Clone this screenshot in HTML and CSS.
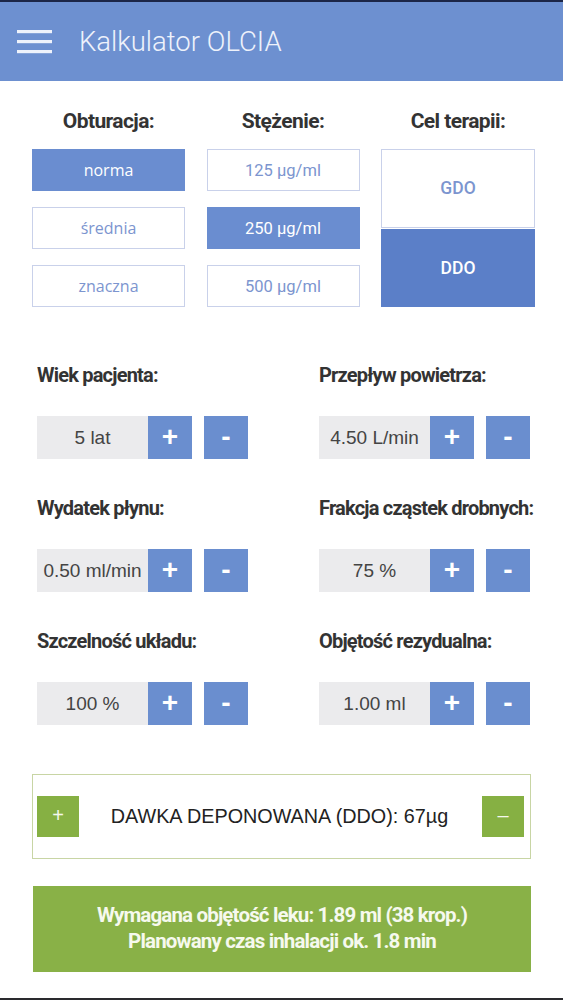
FILE: index.html
```html
<!DOCTYPE html>
<html lang="pl">
<head>
<meta charset="utf-8">
<title>Kalkulator OLCIA</title>
<link rel="stylesheet" href="styles.css">
</head>
<body>
<div class="screen">
  <header class="appbar">
    <svg class="menu" width="35" height="24" viewBox="0 0 35 24" aria-hidden="true">
      <rect x="0" y="0" width="35" height="3.2" fill="#eef2fb"/>
      <rect x="0" y="10" width="35" height="3.2" fill="#eef2fb"/>
      <rect x="0" y="20" width="35" height="3.2" fill="#eef2fb"/>
    </svg>
    <h1 class="title">Kalkulator OLCIA</h1>
  </header>

  <section class="options">
    <div class="opt-col">
      <h2 class="heading">Obturacja:</h2>
      <div class="opt-list">
        <div class="opt opt-sans active">norma</div>
        <div class="opt opt-sans">średnia</div>
        <div class="opt opt-sans">znaczna</div>
      </div>
    </div>
    <div class="opt-col">
      <h2 class="heading">Stężenie:</h2>
      <div class="opt-list">
        <div class="opt">125 µg/ml</div>
        <div class="opt active">250 µg/ml</div>
        <div class="opt">500 µg/ml</div>
      </div>
    </div>
    <div class="opt-col">
      <h2 class="heading">Cel terapii:</h2>
      <div class="opt-list target">
        <div class="opt tall">GDO</div>
        <div class="opt tall active dark">DDO</div>
      </div>
    </div>
  </section>

  <section class="fields">
    <div class="field">
      <div class="label">Wiek pacjenta:</div>
      <div class="stepper">
        <div class="value">5 lat</div>
        <div class="btn">+</div>
        <div class="btn minus">-</div>
      </div>
    </div>
    <div class="field">
      <div class="label">Przepływ powietrza:</div>
      <div class="stepper">
        <div class="value">4.50 L/min</div>
        <div class="btn">+</div>
        <div class="btn minus">-</div>
      </div>
    </div>
    <div class="field">
      <div class="label">Wydatek płynu:</div>
      <div class="stepper">
        <div class="value">0.50 ml/min</div>
        <div class="btn">+</div>
        <div class="btn minus">-</div>
      </div>
    </div>
    <div class="field">
      <div class="label">Frakcja cząstek drobnych:</div>
      <div class="stepper">
        <div class="value">75 %</div>
        <div class="btn">+</div>
        <div class="btn minus">-</div>
      </div>
    </div>
    <div class="field">
      <div class="label">Szczelność układu:</div>
      <div class="stepper">
        <div class="value">100 %</div>
        <div class="btn">+</div>
        <div class="btn minus">-</div>
      </div>
    </div>
    <div class="field">
      <div class="label">Objętość rezydualna:</div>
      <div class="stepper">
        <div class="value">1.00 ml</div>
        <div class="btn">+</div>
        <div class="btn minus">-</div>
      </div>
    </div>
  </section>

  <section class="dose">
    <div class="gbtn">+</div>
    <div class="dose-text">DAWKA DEPONOWANA (DDO): 67µg</div>
    <div class="gbtn">&#8211;</div>
  </section>

  <section class="result">
    <div>Wymagana objętość leku: 1.89 ml (38 krop.)</div>
    <div>Planowany czas inhalacji ok. 1.8 min</div>
  </section>
</div>
</body>
</html>
```

FILE: styles.css
```css
* { box-sizing: border-box; }
html, body { margin: 0; padding: 0; background: #ffffff; }

.screen {
  width: 563px;
  height: 1000px;
  border-top: 2px solid #1c2647;
  border-bottom: 2px solid #2a2a2e;
  display: flex;
  flex-direction: column;
  background: #ffffff;
}

.appbar {
  height: 79px;
  background: #6d90d0;
  display: flex;
  align-items: center;
  padding-left: 17px;
  gap: 27px;
  flex-shrink: 0;
}
.menu { display: block; margin-top: 1px; }
.title {
  margin: 0;
  font-family: Roboto, "Liberation Sans", sans-serif;
  font-weight: 300;
  font-size: 27.5px;
  color: #eef2fb;
}

.options {
  display: grid;
  grid-template-columns: 153px 153px 154px;
  column-gap: 21.5px;
  padding: 28px 0 0 32px;
}
.heading {
  margin: 0 0 16px;
  text-align: center;
  font-family: Roboto, "Liberation Sans", sans-serif;
  font-weight: 700;
  font-size: 21px;
  letter-spacing: -0.6px;
  line-height: 24px;
  color: #333333;
  white-space: nowrap;
}
.opt-list {
  display: flex;
  flex-direction: column;
  gap: 16px;
}
.opt-list.target { gap: 1px; }
.opt {
  height: 42px;
  display: flex;
  align-items: center;
  justify-content: center;
  border: 1px solid #c9d1ea;
  background: #ffffff;
  color: #7c95cf;
  font-family: Roboto, "Liberation Sans", sans-serif;
  font-size: 16.5px;
}
.opt-sans { font-family: "Open Sans", "Liberation Sans", sans-serif; font-size: 16px; }
.opt.active {
  background: #6a8dd0;
  border-color: #6a8dd0;
  color: #ffffff;
}
.opt.tall {
  height: 78.5px;
  font-weight: 500;
  font-size: 17.5px;
}
.opt.dark { background: #5b7fc8; border-color: #5b7fc8; }

.fields {
  display: grid;
  grid-template-columns: 282px 1fr;
  row-gap: 37px;
  padding: 56px 0 0 37px;
}
.label {
  font-family: Roboto, "Liberation Sans", sans-serif;
  font-weight: 700;
  font-size: 20px;
  letter-spacing: -0.8px;
  line-height: 24px;
  color: #333333;
  margin-bottom: 29px;
  white-space: nowrap;
}
.stepper {
  display: flex;
  height: 43px;
}
.value {
  width: 111px;
  background: #ebebed;
  display: flex;
  align-items: center;
  justify-content: center;
  font-family: "Liberation Sans", Arial, sans-serif;
  font-size: 19px;
  color: #444444;
  white-space: nowrap;
}
.btn {
  width: 44px;
  background: #6a8ecf;
  color: #ffffff;
  display: flex;
  align-items: center;
  justify-content: center;
  font-family: "Liberation Sans", Arial, sans-serif;
  font-weight: 700;
  font-size: 28px;
  line-height: 1;
  padding-bottom: 2px;
}
.btn.minus { margin-left: 12px; }

.dose {
  margin: 49px 0 0 32px;
  width: 499px;
  height: 85px;
  border: 1px solid #c8d5a4;
  display: flex;
  align-items: center;
  justify-content: space-between;
  padding: 0 6px 0 4px;
}
.gbtn {
  width: 42px;
  height: 41px;
  background: #86b043;
  color: #f4f8ec;
  display: flex;
  align-items: center;
  justify-content: center;
  font-family: "Liberation Sans", Arial, sans-serif;
  font-size: 20px;
  padding-bottom: 2px;
}
.dose-text {
  font-family: "Liberation Sans", Arial, sans-serif;
  font-size: 19.8px;
  color: #222222;
  white-space: nowrap;
  margin-right: 2px;
}

.result {
  margin: 27px 0 0 33px;
  width: 498px;
  height: 86px;
  background: #89b147;
  display: flex;
  flex-direction: column;
  align-items: center;
  justify-content: center;
  font-family: Roboto, "Liberation Sans", sans-serif;
  font-weight: 700;
  font-size: 20.5px;
  letter-spacing: -0.85px;
  line-height: 26px;
  color: #f6f9ee;
  padding-bottom: 2px;
}
```
